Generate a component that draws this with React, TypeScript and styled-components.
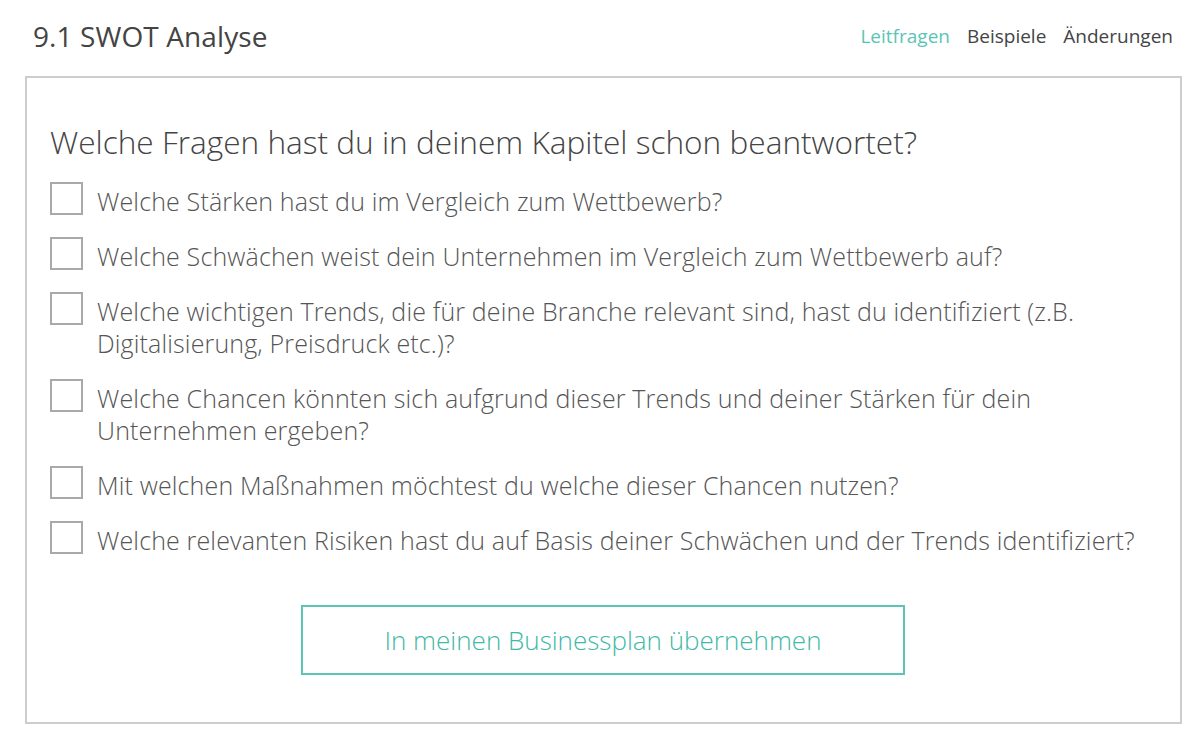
import React from "react";
import styled, { createGlobalStyle } from "styled-components";

const Global = createGlobalStyle`
  html, body { margin: 0; padding: 0; background: #fff; }
  body { font-family: "Open Sans", "Liberation Sans", sans-serif; }
`;

const Page = styled.div`
  width: 1200px;
  padding: 0 20px 0 25px;
  box-sizing: border-box;
`;

const Header = styled.header`
  display: flex;
  align-items: center;
  justify-content: space-between;
  height: 76px;
  box-sizing: border-box;
  padding: 0 7px 4px 8px;
`;

const Title = styled.h1`
  margin: 0;
  font-size: 28px;
  font-weight: 400;
  color: #444;
  letter-spacing: 0.1px;
`;

const Nav = styled.nav`
  display: flex;
  gap: 17px;
`;

const NavLink = styled.a<{ $active?: boolean }>`
  font-size: 19px;
  color: ${(p) => (p.$active ? "#5cc4b5" : "#444")};
  text-decoration: none;
`;

const Card = styled.section`
  border: 2px solid #cdcdcd;
  width: 1157px;
  height: 648px;
  box-sizing: border-box;
  padding: 44px 22px 0 23px;
`;

const Question = styled.h2`
  margin: 0 0 20px;
  font-size: 31.6px;
  font-weight: 300;
  color: #444;
  line-height: 40px;
`;

const List = styled.ul`
  list-style: none;
  margin: 0;
  padding: 0;
  display: flex;
  flex-direction: column;
  gap: 20px;
`;

const Item = styled.li`
  display: flex;
  align-items: flex-start;
  gap: 14px;
`;

const Box = styled.span`
  flex: none;
  width: 33px;
  height: 33px;
  box-sizing: border-box;
  border: 2px solid #a9a9a9;
  background: #fff;
`;

const Label = styled.span`
  font-size: 25px;
  font-weight: 300;
  letter-spacing: 0.15px;
  color: #555;
  line-height: 32px;
  margin-top: 3px;
`;

const Actions = styled.div`
  display: flex;
  justify-content: center;
  margin-top: 49px;
  padding-right: 2px;
`;

const Button = styled.button`
  width: 604px;
  height: 70px;
  border: 2px solid #5cc4b5;
  background: #fff;
  color: #3fb9a7;
  font-family: "Open Sans", "Liberation Sans", sans-serif;
  font-weight: 300;
  font-size: 26px;
  cursor: pointer;
`;

const questions = [
  "Welche Stärken hast du im Vergleich zum Wettbewerb?",
  "Welche Schwächen weist dein Unternehmen im Vergleich zum Wettbewerb auf?",
  "Welche wichtigen Trends, die für deine Branche relevant sind, hast du identifiziert (z.B. Digitalisierung, Preisdruck etc.)?",
  "Welche Chancen könnten sich aufgrund dieser Trends und deiner Stärken für dein Unternehmen ergeben?",
  "Mit welchen Maßnahmen möchtest du welche dieser Chancen nutzen?",
  "Welche relevanten Risiken hast du auf Basis deiner Schwächen und der Trends identifiziert?",
];

export default function App() {
  return (
    <Page>
      <Global />
      <Header>
        <Title>9.1 SWOT Analyse</Title>
        <Nav>
          <NavLink $active>Leitfragen</NavLink>
          <NavLink>Beispiele</NavLink>
          <NavLink>Änderungen</NavLink>
        </Nav>
      </Header>
      <Card>
        <Question>Welche Fragen hast du in deinem Kapitel schon beantwortet?</Question>
        <List>
          {questions.map((q) => (
            <Item key={q}>
              <Box />
              <Label>{q}</Label>
            </Item>
          ))}
        </List>
        <Actions>
          <Button>In meinen Businessplan übernehmen</Button>
        </Actions>
      </Card>
    </Page>
  );
}
